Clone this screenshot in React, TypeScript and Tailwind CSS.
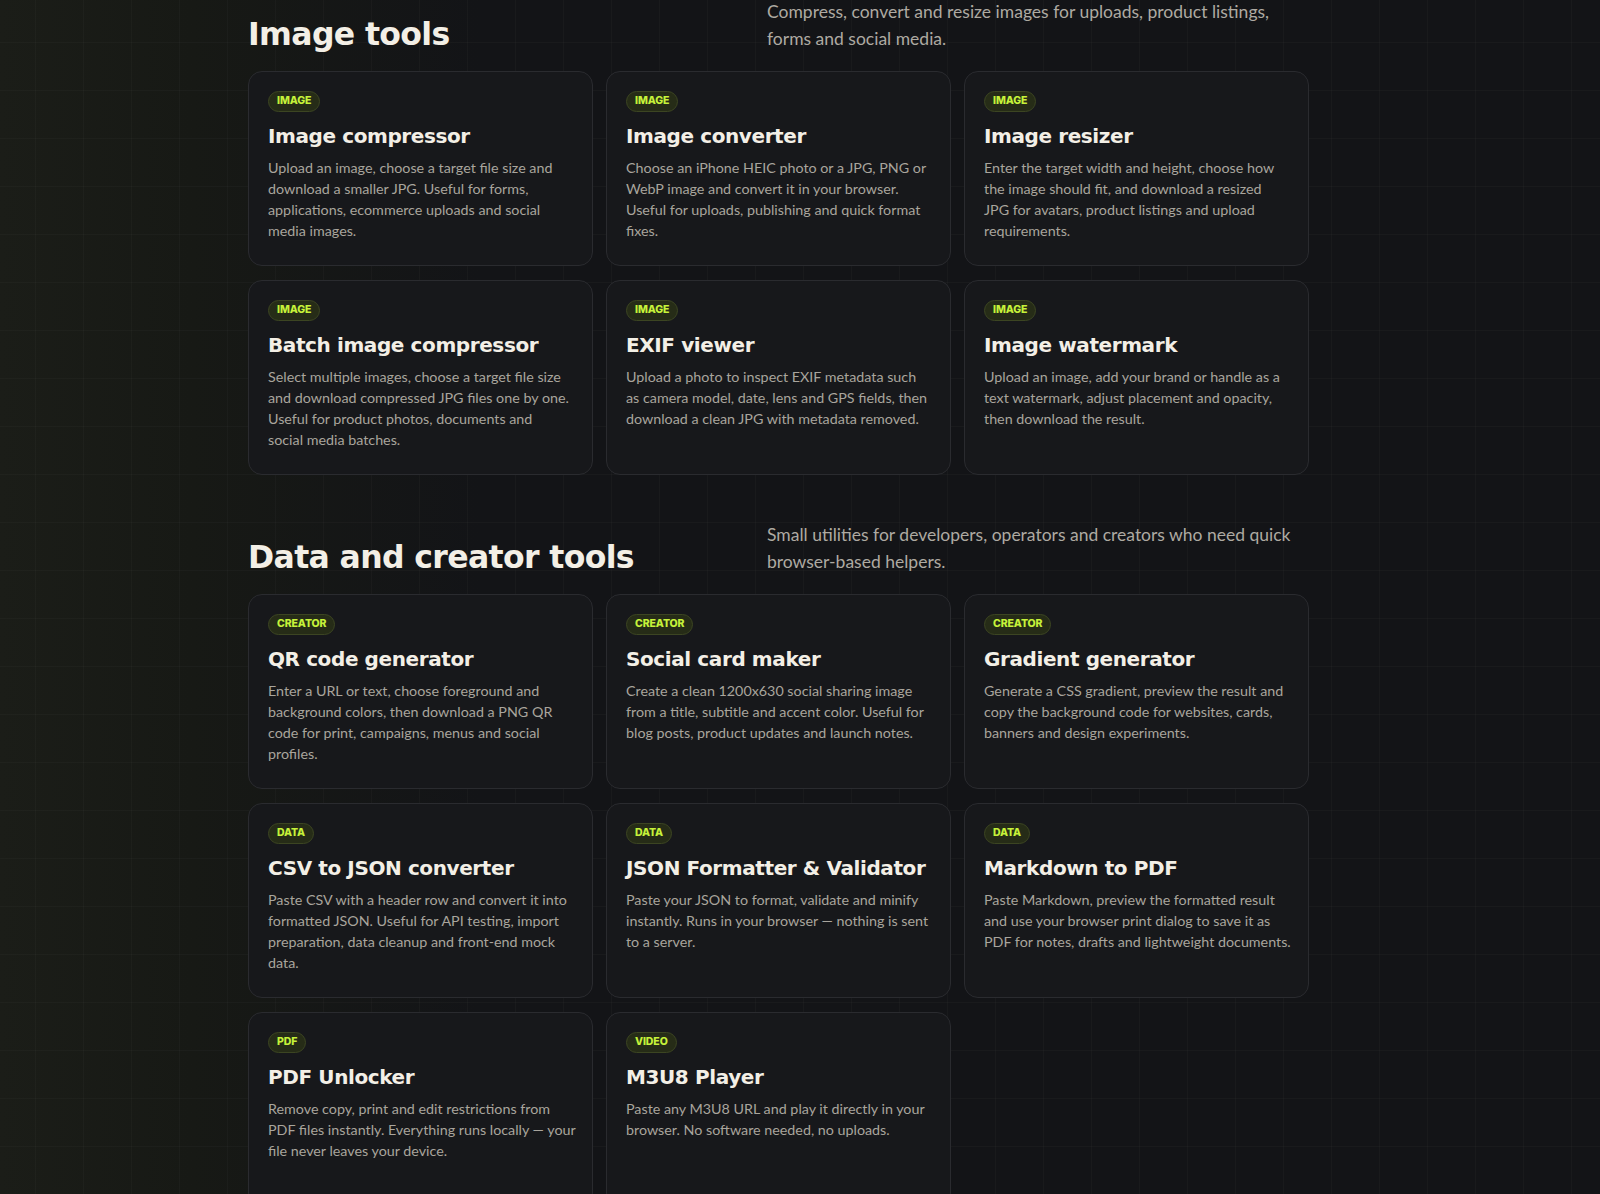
import React from "react";

type Tool = { tag: string; title: string; lines: string[] };

const imageTools: Tool[] = [
  { tag: "IMAGE", title: "Image compressor", lines: ["Upload an image, choose a target file size and", "download a smaller JPG. Useful for forms,", "applications, ecommerce uploads and social", "media images."] },
  { tag: "IMAGE", title: "Image converter", lines: ["Choose an iPhone HEIC photo or a JPG, PNG or", "WebP image and convert it in your browser.", "Useful for uploads, publishing and quick format", "fixes."] },
  { tag: "IMAGE", title: "Image resizer", lines: ["Enter the target width and height, choose how", "the image should fit, and download a resized", "JPG for avatars, product listings and upload", "requirements."] },
  { tag: "IMAGE", title: "Batch image compressor", lines: ["Select multiple images, choose a target file size", "and download compressed JPG files one by one.", "Useful for product photos, documents and", "social media batches."] },
  { tag: "IMAGE", title: "EXIF viewer", lines: ["Upload a photo to inspect EXIF metadata such", "as camera model, date, lens and GPS fields, then", "download a clean JPG with metadata removed."] },
  { tag: "IMAGE", title: "Image watermark", lines: ["Upload an image, add your brand or handle as a", "text watermark, adjust placement and opacity,", "then download the result."] },
];

const dataTools: Tool[] = [
  { tag: "CREATOR", title: "QR code generator", lines: ["Enter a URL or text, choose foreground and", "background colors, then download a PNG QR", "code for print, campaigns, menus and social", "profiles."] },
  { tag: "CREATOR", title: "Social card maker", lines: ["Create a clean 1200x630 social sharing image", "from a title, subtitle and accent color. Useful for", "blog posts, product updates and launch notes."] },
  { tag: "CREATOR", title: "Gradient generator", lines: ["Generate a CSS gradient, preview the result and", "copy the background code for websites, cards,", "banners and design experiments."] },
  { tag: "DATA", title: "CSV to JSON converter", lines: ["Paste CSV with a header row and convert it into", "formatted JSON. Useful for API testing, import", "preparation, data cleanup and front-end mock", "data."] },
  { tag: "DATA", title: "JSON Formatter & Validator", lines: ["Paste your JSON to format, validate and minify", "instantly. Runs in your browser — nothing is sent", "to a server."] },
  { tag: "DATA", title: "Markdown to PDF", lines: ["Paste Markdown, preview the formatted result", "and use your browser print dialog to save it as", "PDF for notes, drafts and lightweight documents."] },
  { tag: "PDF", title: "PDF Unlocker", lines: ["Remove copy, print and edit restrictions from", "PDF files instantly. Everything runs locally — your", "file never leaves your device."] },
  { tag: "VIDEO", title: "M3U8 Player", lines: ["Paste any M3U8 URL and play it directly in your", "browser. No software needed, no uploads."] },
];

function Card({ t }: { t: Tool }) {
  return (
    <div className="flex flex-col items-start rounded-[14px] border border-[#2a2b2f] bg-[#17181b] pl-[19px] pr-4 pt-[19px] pb-[24px]">
      <span className="flex h-[21px] items-center rounded-full border border-[#3c4522] bg-[#262c17] px-[8px] font-['Inter',sans-serif] text-[10.5px] leading-none font-extrabold tracking-[-0.01em] text-[#c6f23a]">
        {t.tag}
      </span>
      <h3 className="mt-[12px] font-['DejaVu_Sans',sans-serif] text-[20px] leading-[25px] font-bold tracking-[-0.02em] text-[#f3efe6]">
        {t.title}
      </h3>
      <p className="mt-[8px] font-['Lato',sans-serif] text-[14.3px] leading-[21px] text-[#a9a59d]">
        {t.lines.map((l, i) => (
          <span key={i} className="block whitespace-nowrap">
            {l}
          </span>
        ))}
      </p>
    </div>
  );
}

function Section({ title, desc, tools }: { title: string; desc: string; tools: Tool[] }) {
  return (
    <section>
      <div className="mb-[19px] flex items-end justify-between">
        <h2 className="font-['DejaVu_Sans',sans-serif] text-[31.5px] leading-[36px] font-bold tracking-[-0.02em] text-[#f3efe6]">
          {title}
        </h2>
        <p className="w-[542px] font-['Lato',sans-serif] text-[17.5px] leading-[27px] text-[#aeaaa2]">
          {desc}
        </p>
      </div>
      <div className="grid auto-rows-fr grid-cols-3 gap-x-[13px] gap-y-[14px]">
        {tools.map((t) => (
          <Card key={t.title} t={t} />
        ))}
      </div>
    </section>
  );
}

export default function App() {
  return (
    <div className="min-h-screen w-full overflow-hidden bg-[#131417] bg-[linear-gradient(90deg,#1b1d18_0%,#171915_12%,#131417_30%,#131417_100%)]">
      <div className="min-h-screen w-full bg-[linear-gradient(to_right,rgba(255,255,255,0.025)_1px,transparent_1px),linear-gradient(to_bottom,rgba(255,255,255,0.025)_1px,transparent_1px)] bg-[size:48px_48px] bg-[position:35px_44px]">
        <div className="-mt-[2px] ml-[248px] flex w-[1061px] flex-col gap-[46px] pb-10">
          <Section
            title="Image tools"
            desc="Compress, convert and resize images for uploads, product listings, forms and social media."
            tools={imageTools}
          />
          <Section
            title="Data and creator tools"
            desc="Small utilities for developers, operators and creators who need quick browser-based helpers."
            tools={dataTools}
          />
        </div>
      </div>
    </div>
  );
}
